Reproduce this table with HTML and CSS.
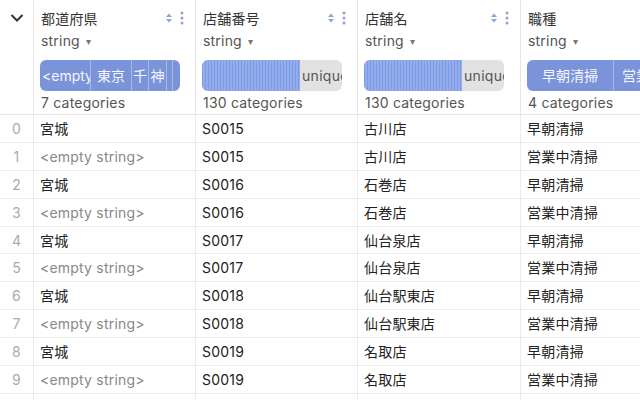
FILE: index.html
```html
<!DOCTYPE html>
<html>
<head>
<meta charset="utf-8">
<link rel="stylesheet" href="styles.css">
</head>
<body>
<div class="frame">
<div class="grid">
  <div class="hcell idx">
    <svg class="chev" width="14" height="10" viewBox="0 0 14 10"><path d="M1.5 2 L7 7.5 L12.5 2" fill="none" stroke="#333" stroke-width="2"/></svg>
  </div>
  <div class="hcell">
    <div class="title"><span>都道府県</span><span class="icons"><svg width="8" height="12" viewBox="0 0 8 12"><path d="M4 1.5 L7 5 L1 5 Z M4 10.5 L7 7 L1 7 Z" fill="#8ea3d8"/></svg><svg width="4" height="14" viewBox="0 0 4 14"><circle cx="2" cy="2" r="1.5" fill="#8ea3d8"/><circle cx="2" cy="7" r="1.5" fill="#8ea3d8"/><circle cx="2" cy="12" r="1.5" fill="#8ea3d8"/></svg></span></div>
    <div class="type">string <span class="caret">▾</span></div>
    <div class="bar cat">
      <span class="seg left" style="width:51px">&lt;empty string&gt;</span>
      <span class="seg" style="width:41px">東京</span>
      <span class="seg" style="width:17px">千</span>
      <span class="seg" style="width:18px">神</span>
      <span class="seg" style="width:6px"></span>
      <span class="seg last"></span>
    </div>
    <div class="count">7 categories</div>
  </div>
  <div class="hcell">
    <div class="title"><span>店舗番号</span><span class="icons"><svg width="8" height="12" viewBox="0 0 8 12"><path d="M4 1.5 L7 5 L1 5 Z M4 10.5 L7 7 L1 7 Z" fill="#8ea3d8"/></svg><svg width="4" height="14" viewBox="0 0 4 14"><circle cx="2" cy="2" r="1.5" fill="#8ea3d8"/><circle cx="2" cy="7" r="1.5" fill="#8ea3d8"/><circle cx="2" cy="12" r="1.5" fill="#8ea3d8"/></svg></span></div>
    <div class="type">string <span class="caret">▾</span></div>
    <div class="bar uniq"><span class="stripes" style="width:98px"></span><span class="utext">unique</span></div>
    <div class="count">130 categories</div>
  </div>
  <div class="hcell">
    <div class="title"><span>店舗名</span><span class="icons"><svg width="8" height="12" viewBox="0 0 8 12"><path d="M4 1.5 L7 5 L1 5 Z M4 10.5 L7 7 L1 7 Z" fill="#8ea3d8"/></svg><svg width="4" height="14" viewBox="0 0 4 14"><circle cx="2" cy="2" r="1.5" fill="#8ea3d8"/><circle cx="2" cy="7" r="1.5" fill="#8ea3d8"/><circle cx="2" cy="12" r="1.5" fill="#8ea3d8"/></svg></span></div>
    <div class="type">string <span class="caret">▾</span></div>
    <div class="bar uniq"><span class="stripes" style="width:98px"></span><span class="utext">unique</span></div>
    <div class="count">130 categories</div>
  </div>
  <div class="hcell">
    <div class="title"><span>職種</span></div>
    <div class="type">string <span class="caret">▾</span></div>
    <div class="bar cat wide">
      <span class="seg" style="width:87px">早朝清掃</span>
      <span class="seg" style="width:87px">営業中清掃</span>
    </div>
    <div class="count">4 categories</div>
  </div>

  <div class="cell idx">0</div><div class="cell">宮城</div><div class="cell">S0015</div><div class="cell">古川店</div><div class="cell">早朝清掃</div>
  <div class="cell idx">1</div><div class="cell empty">&lt;empty string&gt;</div><div class="cell">S0015</div><div class="cell">古川店</div><div class="cell">営業中清掃</div>
  <div class="cell idx">2</div><div class="cell">宮城</div><div class="cell">S0016</div><div class="cell">石巻店</div><div class="cell">早朝清掃</div>
  <div class="cell idx">3</div><div class="cell empty">&lt;empty string&gt;</div><div class="cell">S0016</div><div class="cell">石巻店</div><div class="cell">営業中清掃</div>
  <div class="cell idx">4</div><div class="cell">宮城</div><div class="cell">S0017</div><div class="cell">仙台泉店</div><div class="cell">早朝清掃</div>
  <div class="cell idx">5</div><div class="cell empty">&lt;empty string&gt;</div><div class="cell">S0017</div><div class="cell">仙台泉店</div><div class="cell">営業中清掃</div>
  <div class="cell idx">6</div><div class="cell">宮城</div><div class="cell">S0018</div><div class="cell">仙台駅東店</div><div class="cell">早朝清掃</div>
  <div class="cell idx">7</div><div class="cell empty">&lt;empty string&gt;</div><div class="cell">S0018</div><div class="cell">仙台駅東店</div><div class="cell">営業中清掃</div>
  <div class="cell idx">8</div><div class="cell">宮城</div><div class="cell">S0019</div><div class="cell">名取店</div><div class="cell">早朝清掃</div>
  <div class="cell idx">9</div><div class="cell empty">&lt;empty string&gt;</div><div class="cell">S0019</div><div class="cell">名取店</div><div class="cell">営業中清掃</div>
  <div class="cell idx">10</div><div class="cell">宮城</div><div class="cell">S0020</div><div class="cell">岩沼店</div><div class="cell">早朝清掃</div>
</div>
</div>
</body>
</html>
```

FILE: styles.css
```css
* { box-sizing: border-box; }
html, body { margin: 0; padding: 0; background: #fff; }
body {
  font-family: Inter, "Noto Sans CJK JP", sans-serif;
  font-size: 14px;
  letter-spacing: 0.2px;
  color: #222;
}
.frame {
  width: 640px;
  height: 400px;
  overflow: hidden;
}
.grid {
  display: grid;
  grid-template-columns: 34px 162px 162px 163px 163px;
  grid-template-rows: 115px;
  grid-auto-rows: 27.9px;
  width: 684px;
}
.hcell {
  border-right: 1px solid #e6e6e6;
  border-bottom: 1px solid #e6e6e6;
  padding: 7px 6px 0 6px;
  overflow: hidden;
  display: flex;
  flex-direction: column;
}
.hcell.idx { padding: 0; align-items: center; }
.chev { margin-top: 13px; }
.title {
  display: flex;
  justify-content: space-between;
  align-items: center;
  height: 22px;
  color: #333;
  padding-right: 5px;
  padding-left: 1px;
}
.icons { display: flex; align-items: center; gap: 7px; }
.type {
  color: #555;
  height: 22px;
  line-height: 22px;
  margin-top: 1px;
  padding-left: 1px;
}
.caret { font-size: 10px; color: #777; position: relative; top: -1px; margin-left: 2px; }
.bar {
  margin-top: 8px;
  height: 31px;
  width: 140px;
  border-radius: 6px;
  overflow: hidden;
  display: flex;
  flex-shrink: 0;
  letter-spacing: 0;
}
.bar.cat { background: #7b93d9; }
.bar.wide { width: 200px; }
.seg {
  color: #f4f6fc;
  height: 31px;
  line-height: 31px;
  white-space: nowrap;
  overflow: hidden;
  border-right: 1px solid #a9b9e6;
  flex-shrink: 0;
  text-align: center;
}
.seg.left { text-align: left; padding-left: 2px; }
.seg.last { border-right: none; flex: 1; }
.bar.uniq { background: #e2e2e2; }
.stripes {
  height: 31px;
  flex-shrink: 0;
  background: repeating-linear-gradient(90deg, #7e9be4 0px, #7e9be4 1px, #93acec 1px, #93acec 3px);
}
.utext { color: #555; line-height: 31px; padding-left: 2px; white-space: nowrap; letter-spacing: 0.3px; }
.count {
  color: #555;
  height: 22px;
  line-height: 23px;
  padding-left: 1px;
}
.cell {
  border-right: 1px solid #ececec;
  border-bottom: 1px solid #ececec;
  padding: 0 6px;
  line-height: 27px;
  white-space: nowrap;
  overflow: hidden;
  color: #222;
}
.cell.idx { color: #aaa; padding: 0; text-align: center; }
.cell.empty { color: #888; }
```
